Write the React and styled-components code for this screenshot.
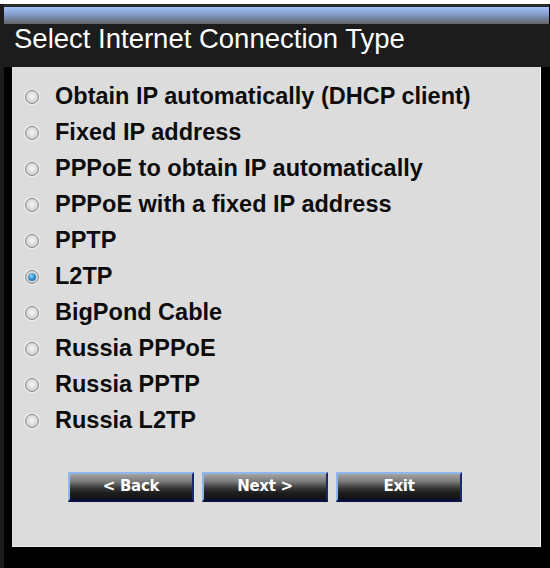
import React from 'react';
import styled, { createGlobalStyle, css } from 'styled-components';

const Global = createGlobalStyle`
  html, body { margin: 0; padding: 0; background: #000; }
  body { width: 550px; height: 568px; overflow: hidden; }
`;

const Page = styled.div`
  width: 550px;
  height: 568px;
  box-sizing: border-box;
  background: #000;
  border-top: 4px solid #fff;
  display: flex;
  flex-direction: column;
`;

const Frame = styled.div`
  flex: 1;
  display: flex;
  flex-direction: column;
  border-left: 4px solid #1c1c1c;
`;

const TopBar = styled.div`
  height: 20px;
  margin-right: 1px;
  box-sizing: border-box;
  border-top: 3px solid #2a2a2a;
  background: linear-gradient(#a2c0f2, #8aa6d8 35%, #72809a 70%, #666 100%);
`;

const Header = styled.div`
  height: 43px;
  background: #1c1c1c;
  display: flex;
  align-items: flex-start;
`;

const Title = styled.h1`
  margin: 0;
  padding: 1px 0 0 10px;
  font: 400 27.5px/27px "Liberation Sans", Arial, sans-serif;
  color: #fff;
`;

const Panel = styled.div`
  margin-left: 8px;
  width: 529px;
  height: 480px;
  box-sizing: border-box;
  background: #dcdcdc;
  border-right: 1px solid #f2f2f2;
  border-bottom: 1px solid #eaeaea;
  display: flex;
  flex-direction: column;
  padding: 12px 0 0 13px;
`;

const List = styled.div`
  display: flex;
  flex-direction: column;
`;

const Row = styled.label`
  height: 36px;
  display: flex;
  align-items: center;
  font: 700 23.5px/1 "Liberation Sans", Arial, sans-serif;
  color: #0c0c0c;
`;

const Radio = styled.span`
  width: 14px;
  height: 14px;
  border-radius: 50%;
  box-sizing: border-box;
  border: 1px solid #8c8c8c;
  background: radial-gradient(circle at 50% 45%, #f6f6f6 0%, #e0e0e0 45%, #b8b8b8 100%);
  box-shadow: 0 0 0 1px rgba(255, 255, 255, 0.6);
  margin-right: 16px;
  flex: none;
  position: relative;
  ${(p) =>
    p.$checked &&
    css`
      &::after {
        content: '';
        position: absolute;
        inset: 2px;
        border-radius: 50%;
        background: radial-gradient(circle at 40% 35%, #9ad6f8, #2a86c8 55%, #0c4f8a);
      }
    `}
`;

const Buttons = styled.div`
  display: flex;
  gap: 8px;
  margin-top: 33px;
  padding-left: 43px;
`;

const Button = styled.button`
  width: 126px;
  height: 30px;
  box-sizing: border-box;
  padding: 0 0 1px;
  border-style: solid;
  border-width: 2px 2px 3px 2px;
  border-color: #8fb6ee #1c2a6c #0c1240 #8fb6ee;
  background: linear-gradient(#a4a4a4 0%, #7a7a7a 30%, #3a3a3a 55%, #1e1e1e 75%, #121212 100%);
  color: #fff;
  font: 700 15px/1 "DejaVu Sans", Verdana, sans-serif;
  letter-spacing: -0.3px;
  cursor: pointer;
`;

const options = [
  'Obtain IP automatically (DHCP client)',
  'Fixed IP address',
  'PPPoE to obtain IP automatically',
  'PPPoE with a fixed IP address',
  'PPTP',
  'L2TP',
  'BigPond Cable',
  'Russia PPPoE',
  'Russia PPTP',
  'Russia L2TP',
];

export default function App() {
  return (
    <>
      <Global />
      <Page>
        <Frame>
          <TopBar />
          <Header>
            <Title>Select Internet Connection Type</Title>
          </Header>
          <Panel>
            <List>
              {options.map((o) => (
                <Row key={o}>
                  <Radio $checked={o === 'L2TP'} />
                  {o}
                </Row>
              ))}
            </List>
            <Buttons>
              <Button>&lt; Back</Button>
              <Button>Next &gt;</Button>
              <Button>Exit</Button>
            </Buttons>
          </Panel>
        </Frame>
      </Page>
    </>
  );
}
